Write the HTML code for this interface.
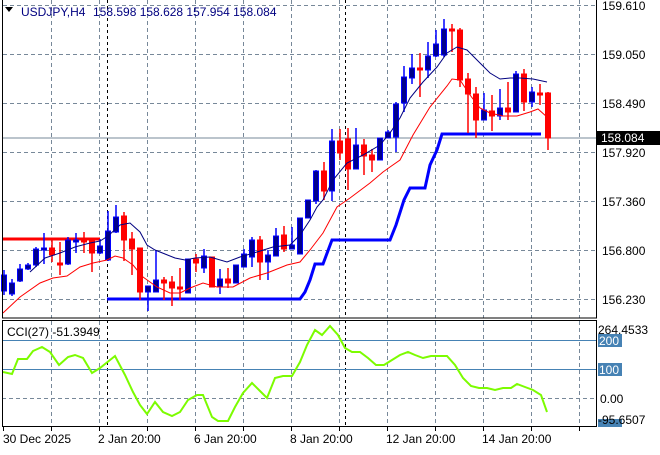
<!DOCTYPE html>
<html><head><meta charset="utf-8"><style>
html,body{margin:0;padding:0;background:#fff;}
body{width:660px;height:450px;overflow:hidden;font-family:"Liberation Sans",Arial,sans-serif;}
svg text{font-family:"Liberation Sans",Arial,sans-serif;font-size:12px;}
</style></head><body>
<svg id="s" width="660" height="450" xmlns="http://www.w3.org/2000/svg">
<rect width="660" height="450" fill="#fff"/>
<g id="grid" stroke="#778899" stroke-dasharray="4,3" stroke-width="1"></g>
<line x1="107.5" y1="0" x2="107.5" y2="318" stroke="#000" stroke-dasharray="3,3"/>
<line x1="107.5" y1="320" x2="107.5" y2="426" stroke="#000" stroke-dasharray="3,3"/>
<line x1="345.5" y1="0" x2="345.5" y2="318" stroke="#000" stroke-dasharray="3,3"/>
<line x1="345.5" y1="320" x2="345.5" y2="426" stroke="#000" stroke-dasharray="3,3"/>
<line x1="2" y1="138" x2="596" y2="138" stroke="#778899" stroke-width="1"/>
<polyline fill="none" stroke="#ff0000" stroke-width="3" points="3,239 100,239"/>
<polyline fill="none" stroke="#0000ff" stroke-width="3" points="107,299 300,299 305,292 310,280 315,264 323,264 332,240 390,240 396,225 404,200 410,188 425,188 430,165 437,150 442,134 541,134"/>
<g id="candles"></g>
<polyline fill="none" stroke="#000080" stroke-width="1" points="30,272 45,258 60,253 75,247 90,243 100,241 108,236 120,225 130,223 140,232 147,245 155,250 165,254 175,258 185,260 195,258 210,257 227,262 240,257 257,252 273,247 290,245 300,235 310,220 317,207 323,200 333,180 347,163 363,155 380,145 390,133 400,118 410,98 423,82 437,67 447,53 457,47 467,50 480,63 490,73 500,79 510,78 520,78 533,79 547,82"/>
<polyline fill="none" stroke="#ff0000" stroke-width="1" points="3,313 20,297 40,283 53,278 67,276 80,267 93,263 107,260 115,256 123,258 133,265 143,277 157,287 170,293 180,293 190,288 203,283 217,287 233,287 250,278 267,273 287,265 300,262 310,250 323,233 337,207 350,198 370,183 383,172 390,167 400,160 413,135 430,107 447,86 452,79 460,80 470,95 480,108 490,113 503,116 517,116 530,112 538,109 547,117"/>
<line x1="2" y1="340.5" x2="596" y2="340.5" stroke="#4682b4"/>
<line x1="2" y1="369.5" x2="596" y2="369.5" stroke="#4682b4"/>
<line x1="2" y1="398.5" x2="596" y2="398.5" stroke="#778899" stroke-dasharray="4,3"/>
<polyline fill="none" stroke="#7cfc00" stroke-width="2" points="3,372 12,374 18,359 27,359 33,351 42,347 50,352 59,365 68,357 75,355 83,358 92,373 100,368 115,356 125,375 133,392 140,405 147,414 155,402 163,412 172,416 180,412 188,400 197,395 203,395 212,417 218,421 228,421 235,407 243,393 252,383 260,391 267,398 275,378 283,376 292,376 300,362 307,345 315,330 322,335 330,326 338,335 345,348 352,352 360,352 368,358 376,365 384,365 392,360 400,355 408,352 415,355 423,358 431,356 439,356 447,356 455,365 463,378 471,386 479,388 487,388 495,390 503,388 511,388 517,384 525,387 533,390 541,395 547,412"/>
<rect x="2.5" y="-1" width="594" height="319" fill="none" stroke="#000"/>
<rect x="2.5" y="320.5" width="594" height="106" fill="none" stroke="#000"/>
<g id="ticks" stroke="#000"></g>
<g fill="#000">
<text x="602" y="10">159.610</text>
<text x="602" y="59">159.050</text>
<text x="602" y="108">158.490</text>
<text x="602" y="157">157.920</text>
<text x="602" y="206">157.360</text>
<text x="602" y="255">156.800</text>
<text x="602" y="304">156.230</text>
</g>
<rect x="597" y="131" width="63" height="14" fill="#000"/>
<text x="601" y="142" fill="#fff">158.084</text>
<text x="598" y="334" fill="#000">264.4533</text>
<rect x="598" y="334" width="24" height="13" fill="#4682b4"/>
<text x="599" y="345" fill="#fff">200</text>
<rect x="598" y="363" width="24" height="13" fill="#4682b4"/>
<text x="599" y="374" fill="#fff">100</text>
<text x="600" y="403" fill="#000">0.00</text>
<rect x="598" y="419" width="24" height="8" fill="#4682b4"/>
<text x="598" y="424" fill="#000">-95.6507</text>
<g fill="#000">
<text x="3" y="443">30 Dec 2025</text>
<text x="98" y="443">2 Jan 20:00</text>
<text x="194" y="443">6 Jan 20:00</text>
<text x="290" y="443">8 Jan 20:00</text>
<text x="386" y="443">12 Jan 20:00</text>
<text x="482" y="443">14 Jan 20:00</text>
</g>
<text x="7" y="336" fill="#000">CCI(27) -51.3949</text>
<path d="M5,7 L13,7 L9,12 Z" fill="#000"/>
<text x="21" y="16" fill="#000080">USDJPY,H4</text>
<text x="93" y="16" fill="#000080">158.598 158.628 157.954 158.084</text>
</svg>
<script>
var ns="http://www.w3.org/2000/svg";
function el(p,t,a){var e=document.createElementNS(ns,t);for(var k in a)e.setAttribute(k,a[k]);p.appendChild(e);return e;}
var g=document.getElementById('grid');
[51,99,147,195,243,291,339,387,435,483,531,579].forEach(function(x){
 el(g,'line',{x1:x+.5,y1:0,x2:x+.5,y2:318});el(g,'line',{x1:x+.5,y1:321,x2:x+.5,y2:426});});
[5,54,103,152,201,250,299].forEach(function(y){el(g,'line',{x1:3,y1:y+.5,x2:596,y2:y+.5});});
var tk=document.getElementById('ticks');
[3,51,99,147,195,243,291,339,387,435,483,531,579].forEach(function(x){el(tk,'line',{x1:x+.5,y1:427,x2:x+.5,y2:431});});
var d=[[275,291,270,295,'b'],[283,294,279,296,'b'],[269,281,264,282,'b'],[265,269,263,270,'b'],[249,265,247,267,'b'],[248,250,233,264,'b'],[248,255,240,262,'r'],[263,265,242,275,'r'],[240,264,237,265,'b'],[240,242,233,253,'b'],[240,242,232,253,'r'],[241,253,240,272,'r'],[246,253,239,254,'b'],[231,260,211,261,'b'],[217,232,205,233,'b'],[216,240,212,261,'r'],[239,249,232,275,'r'],[248,292,248,300,'r'],[286,292,286,311,'b'],[280,292,250,292,'b'],[280,283,277,300,'r'],[282,288,276,306,'r'],[287,289,268,300,'r'],[259,293,259,293,'b'],[259,263,254,272,'r'],[256,268,249,273,'b'],[257,287,257,287,'r'],[279,287,269,294,'b'],[279,283,268,288,'r'],[265,283,265,283,'b'],[254,267,249,267,'b'],[240,257,237,267,'b'],[240,262,236,280,'r'],[255,262,250,280,'b'],[236,256,228,256,'b'],[235,249,226,252,'r'],[245,249,227,249,'b'],[218,254,218,254,'b'],[200,218,200,218,'b'],[171,201,170,204,'b'],[171,191,162,200,'r'],[141,191,129,201,'b'],[141,153,129,160,'r'],[139,169,128,190,'r'],[145,169,128,169,'b'],[145,156,139,175,'r'],[155,160,149,172,'r'],[138,160,138,160,'b'],[132,138,130,138,'b'],[104,137,102,152,'b'],[77,103,66,112,'b'],[68,78,54,84,'b'],[68,70,53,97,'r'],[56,70,42,78,'b'],[44,56,30,57,'b'],[29,55,19,57,'b'],[29,31,24,52,'r'],[30,80,28,87,'r'],[79,94,73,133,'r'],[94,120,87,138,'r'],[110,120,93,120,'b'],[111,116,95,131,'r'],[108,116,89,120,'b'],[108,112,82,120,'r'],[74,112,71,112,'b'],[74,102,69,111,'r'],[92,102,87,107,'b'],[93,95,84,105,'r'],[93,138,92,150,'r']];
var cg=document.getElementById('candles');
d.forEach(function(c,i){var x=4+8*i;var col=c[4]=='b'?'#0000ff':'#ff0000';
 el(cg,'line',{x1:x,y1:c[2],x2:x,y2:c[3],stroke:col,'stroke-width':1.5});
 var h=Math.max(c[1]-c[0],2);
 el(cg,'rect',{x:x-2.5,y:c[0],width:5,height:h,fill:c[4]=='b'?'#00008b':'#ff0000',stroke:col,'stroke-width':1});
});
</script>
</body></html>
